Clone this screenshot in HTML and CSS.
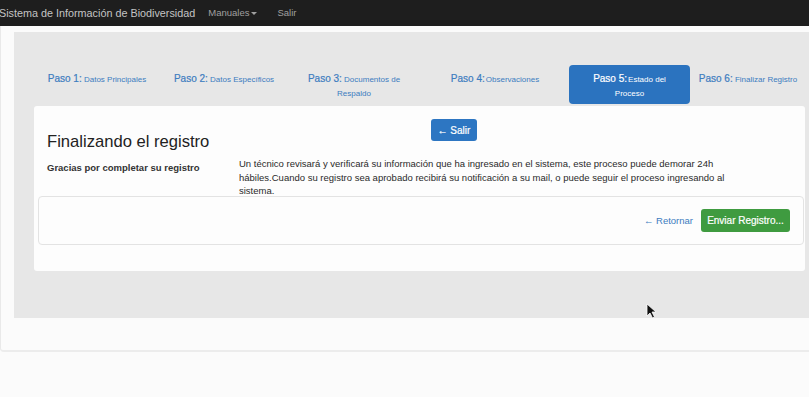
FILE: index.html
```html
<!DOCTYPE html>
<html>

<head>
  <meta charset="utf-8" />
  <title>Sistema de Información de Biodiversidad</title>
  <link rel="stylesheet" href="styles.css">
</head>

<body>
  <div id="navbar">
    <span class="brand">Sistema de Información de Biodiversidad</span>
    <span class="navlink">Manuales<span class="caret"></span></span>
    <span class="navlink">Salir</span>
  </div>

  <div id="page">
    <div class="well">
      <div class="steps">
        <div class="step"><b>Paso 1:</b> Datos Principales</div>
        <div class="step"><b>Paso 2:</b> Datos Específicos</div>
        <div class="step"><b>Paso 3:</b> Documentos de<br>Respaldo</div>
        <div class="step"><b class="tight">Paso 4:</b>Observaciones</div>
        <div class="step active"><b class="tight">Paso 5:</b>Estado del<br>Proceso</div>
        <div class="step"><b>Paso 6:</b> Finalizar Registro</div>
      </div>

      <div class="panel">
        <div class="toprow">
          <h3>Finalizando el registro</h3>
          <button class="btn blue">&larr; Salir</button>
        </div>
        <div class="inforow">
          <div class="thanks">Gracias por completar su registro</div>
          <p>Un técnico revisará y verificará su información que ha ingresado en el sistema, este proceso puede demorar 24h hábiles.Cuando su registro sea aprobado recibirá su notificación a su mail, o puede seguir el proceso ingresando al sistema.</p>
        </div>
        <div class="actions">
          <a class="back">&larr; Retornar</a>
          <button class="btn green">Enviar Registro...</button>
        </div>
      </div>
    </div>
  </div>

  <svg class="cursor" width="12" height="16" viewBox="0 0 12 16">
    <path d="M1 1 L1 13 L4 10 L6.5 15 L8.5 14 L6 9 L10 9 Z" fill="#111" stroke="#fff" stroke-width="0.8" />
  </svg>
</body>

</html>
```

FILE: styles.css
```css
body {
  font-family: "Liberation Sans", Arial, Helvetica, sans-serif;
  font-size: 10px;
  color: #333333;
  background-color: #fbfbfb;
  padding: 0;
  margin: 0;
  overflow: hidden;
}

#navbar {
  height: 26px;
  background: #1e1e1e;
  display: flex;
  align-items: center;
  padding-bottom: 1px;
  box-sizing: border-box;
}

.brand {
  font-size: 10.8px;
  color: #c4c4c4;
  margin-left: -1px;
  margin-right: 13px;
}

.navlink {
  font-size: 9.5px;
  color: #a0a0a0;
  margin-right: 20px;
}

.caret {
  display: inline-block;
  width: 0;
  height: 0;
  margin-left: 2px;
  vertical-align: middle;
  border-top: 3px solid #a0a0a0;
  border-left: 3px solid transparent;
  border-right: 3px solid transparent;
}

#page {
  padding: 6px 0 32px 13px;
  border-left: 1px solid #e9e9e9;
  border-bottom: 2px solid #ececec;
  border-bottom-left-radius: 4px;
  height: 286px;
}

.well {
  background: #e7e7e7;
  height: 286px;
  padding: 33px 0 0 19px;
  box-sizing: border-box;
}

.steps {
  display: grid;
  grid-template-columns: 128px 126px 134px 148px 121px 116px;
  height: 39px;
  margin-bottom: 2px;
}

.step {
  color: #3c7cc0;
  font-size: 8px;
  text-align: center;
  line-height: 14px;
  padding: 7px 8px 0;
}

.step b {
  font-size: 10px;
  font-weight: normal;
  -webkit-text-stroke: 0.2px #3c7cc0;
}

.step b.tight {
  margin-right: 1px;
}

.step.active {
  background: #2b73bf;
  color: #ffffff;
  border-radius: 4px;
  padding: 7px 18px 0;
}

.step.active b {
  -webkit-text-stroke: 0.2px #ffffff;
}

.panel {
  margin-left: 1px;
  width: 771px;
  height: 165px;
  background: #fdfdfd;
  border-radius: 3px;
  padding: 13px 0 0 4px;
  box-sizing: border-box;
}

.toprow {
  display: flex;
  align-items: flex-start;
}

h3 {
  font-size: 16.6px;
  font-weight: normal;
  color: #222;
  margin: 13px 0 0 9px;
  width: 384px;
}

.btn {
  font-family: "Liberation Sans", Arial, sans-serif;
  font-size: 10px;
  color: #ffffff;
  border: none;
  border-radius: 3px;
  cursor: pointer;
}

.blue {
  background: #2d76c2;
  width: 46px;
  height: 22px;
  -webkit-text-stroke: 0.2px #fff;
}

.inforow {
  display: flex;
  margin-top: 5px;
}

.thanks {
  font-weight: bold;
  font-size: 9.5px;
  margin: 5px 0 0 9px;
  width: 192px;
}

.inforow p {
  margin: 0;
  width: 505px;
  line-height: 13.5px;
  font-size: 9.5px;
  color: #2a2a2a;
}

.actions {
  margin-top: -2px;
  width: 766px;
  height: 49px;
  border: 1px solid #e3e3e3;
  border-radius: 4px;
  box-sizing: border-box;
  display: flex;
  justify-content: flex-end;
  align-items: center;
  padding-right: 13px;
  gap: 8px;
}

.back {
  color: #3c7cc0;
  font-size: 9.5px;
}

.green {
  background: #3f9b40;
  width: 89px;
  height: 23px;
  -webkit-text-stroke: 0.2px #fff;
}

.cursor {
  position: absolute;
  left: 646px;
  top: 303px;
}
```
